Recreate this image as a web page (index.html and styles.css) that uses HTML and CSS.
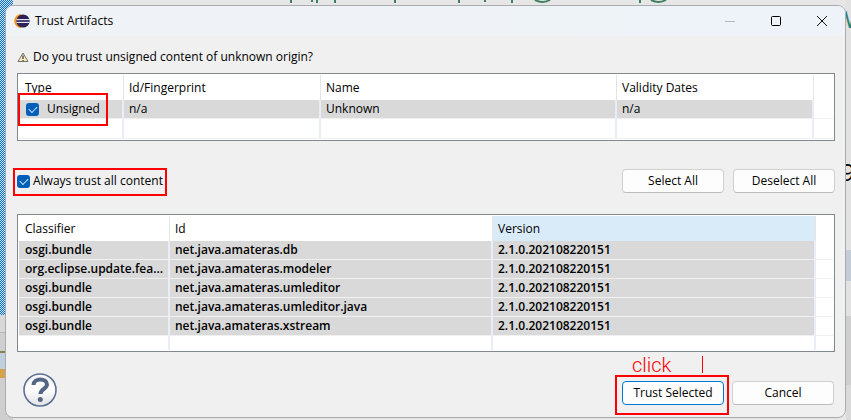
FILE: index.html
```html
<!DOCTYPE html>
<html lang="en">
<head>
<meta charset="utf-8">
<title>Trust Artifacts</title>
<link rel="stylesheet" href="styles.css">
</head>
<body>
<div class="desktop" aria-hidden="true">
  <svg class="checker" width="13" height="315" shape-rendering="crispEdges">
    <defs><pattern id="ck" width="2" height="2" patternUnits="userSpaceOnUse"><rect width="2" height="2" fill="#0070cc"/><rect width="1" height="1" fill="#d0e2f0"/><rect x="1" y="1" width="1" height="1" fill="#d0e2f0"/></pattern></defs>
    <rect width="13" height="315" fill="url(#ck)"/>
  </svg>
  <svg class="fringe" viewBox="0 0 400 5">
    <path fill="#3f7f5f" d="M10 0h2v3h-2zM31 0h2v2h-2zM36 0h2v3h-2zM54 0h2v3h-2zM114 0h2v3h-2zM178 0h2v3h-2zM204 0h2v2h-2zM231 0h2v3h-2zM359 0h2v3h-2z"/>
    <path d="M255 0q8 4 15 0M371 0q8 4 15 0" fill="none" stroke="#3f7f5f" stroke-width="2"/>
  </svg>
  <div class="right-strip"><span class="peek peek-w">W</span><span class="peek peek-9">9</span></div>
  <div class="left-low"></div>
</div>
<main class="dialog">
  <header class="titlebar">
    <svg class="logo" viewBox="0 0 16 16" width="16" height="16">
      <path d="M7 1C-2 2-2 14 7 15z" fill="#f7941e"/>
      <circle cx="9" cy="8" r="6.600" fill="#2c2255"/>
      <path d="M2.500 6.500h13M2.500 9.500h13" stroke="#e6e4f0"/>
      <path d="M2.500 8h13" stroke="#6d6796"/>
    </svg>
    <h1>Trust Artifacts</h1>
    <div class="winbtns">
      <button aria-label="Minimize" disabled><svg viewBox="0 0 12 12" width="12" height="12"><path d="M1 6.500h10" stroke="#b5b9bc"/></svg></button>
      <button aria-label="Maximize"><svg viewBox="0 0 12 12" width="12" height="12"><rect x="1.500" y="1.500" width="9" height="9" rx="1" fill="none" stroke="#000"/></svg></button>
      <button aria-label="Close"><svg viewBox="0 0 12 12" width="12" height="12"><path d="M1 1l10 10M11 1L1 11" stroke="#111"/></svg></button>
    </div>
  </header>
  <div class="content">
    <p class="question">
      <svg viewBox="0 0 12 11" width="12" height="11"><path d="M6 1L11 9.500H1z" fill="#fbe9c4" stroke="#77716a" stroke-linejoin="round"/><path d="M6 3.500v3.500M6 8v1" stroke="#333" stroke-width="1.200"/></svg>
      Do you trust unsigned content of unknown origin?
    </p>
    <div class="grid">
      <table>
        <colgroup><col class="c-type"><col class="c-print"><col class="c-name"><col class="c-print"><col></colgroup>
        <thead><tr><th>Type</th><th>Id/Fingerprint</th><th>Name</th><th>Validity Dates</th><td></td></tr></thead>
        <tbody>
          <tr><td><label class="check marked marked-row"><input type="checkbox" checked>Unsigned</label></td><td>n/a</td><td>Unknown</td><td>n/a</td><td></td></tr>
          <tr class="empty"><td></td><td></td><td></td><td></td><td></td></tr>
        </tbody>
      </table>
    </div>
    <div class="options">
      <label class="check marked marked-all"><input type="checkbox" checked>Always trust all content</label>
      <div class="buttons">
        <button class="btn">Select All</button>
        <button class="btn">Deselect All</button>
      </div>
    </div>
    <div class="grid">
      <table>
        <colgroup><col class="c-class"><col class="c-wide"><col class="c-wide"><col></colgroup>
        <thead><tr><th>Classifier</th><th>Id</th><th class="sorted">Version</th><td></td></tr></thead>
        <tbody class="bold">
          <tr><td>osgi.bundle</td><td>net.java.amateras.db</td><td>2.1.0.202108220151</td><td></td></tr>
          <tr><td>org.eclipse.update.fea...</td><td>net.java.amateras.modeler</td><td>2.1.0.202108220151</td><td></td></tr>
          <tr><td>osgi.bundle</td><td>net.java.amateras.umleditor</td><td>2.1.0.202108220151</td><td></td></tr>
          <tr><td>osgi.bundle</td><td>net.java.amateras.umleditor.java</td><td>2.1.0.202108220151</td><td></td></tr>
          <tr><td>osgi.bundle</td><td>net.java.amateras.xstream</td><td>2.1.0.202108220151</td><td></td></tr>
          <tr class="empty last"><td></td><td></td><td></td><td></td></tr>
        </tbody>
      </table>
    </div>
    <footer class="footer">
      <button class="help" aria-label="Help">
        <svg viewBox="0 0 36 36" width="36" height="36">
          <defs><linearGradient id="hg" x1="0" y1="0" x2="0" y2="1"><stop offset="0" stop-color="#f5f5f5"/><stop offset=".5" stop-color="#fcfcfc"/><stop offset="1" stop-color="#e2e2e4"/></linearGradient></defs>
          <circle cx="18" cy="18" r="16" fill="url(#hg)" stroke="#5c6f91" stroke-width="1.600"/>
          <path d="M11.500 13c0-7.500 13.500-7 13.500-.5 0 4.500-6.500 4.500-6.500 9.500" fill="none" stroke="#526583" stroke-width="4"/>
          <circle cx="18.300" cy="27.500" r="2.500" fill="#526583"/>
        </svg>
      </button>
      <div class="buttons">
        <div class="marked marked-trust">
          <span class="note">click</span><span class="caret"></span>
          <button class="btn primary">Trust Selected</button>
        </div>
        <button class="btn">Cancel</button>
      </div>
    </footer>
  </div>
</main>
</body>
</html>
```
FILE: styles.css
```css
* { box-sizing: border-box; }
body {
  margin: 0;
  padding: 5px 5px 2px;
  min-height: 100vh;
  display: flex;
  overflow: hidden;
  position: relative;
  background: #e6e6e6;
  color: #000;
  font: 12px/18px "Open Sans", "Noto Sans", sans-serif;
}
button, input { font: inherit; color: inherit; }

.desktop { position: absolute; inset: 0; }
.checker { position: absolute; top: 0; left: 0; }
.fringe { position: absolute; left: 280px; top: 0; width: 400px; height: 5px; }
.right-strip { position: absolute; right: 0; top: 0; bottom: 0; width: 5px; overflow: hidden; background: linear-gradient(#e2e2e2 250px, #c4ccd8 250px, #c4ccd8 281px, #e2e2e2 281px, #e2e2e2 316px, #cfcfcf 316px, #cfcfcf 385px, #dadada 385px); }
.peek { position: absolute; font-size: 24px; line-height: 24px; }
.peek-w { left: -2px; top: 7px; color: #2f7f75; }
.peek-9 { left: -5px; top: 160px; }
.left-low { position: absolute; left: 0; top: 315px; bottom: 0; width: 13px; background: linear-gradient(#d8d8d8 17px, #b9b9b9 17px, #b9b9b9 18px, #cfcfcf 18px, #cfcfcf 36px, #8a8150 36px, #8a8150 38px, #bfd0dc 38px, #bfd0dc 54px, #d5a24a 54px, #d5a24a 63px, #cfcfcf 63px); }

.dialog {
  position: relative;
  flex: 1;
  display: flex;
  flex-direction: column;
  background: #f0f0f0;
  border: 1px solid #a9abae;
  border-radius: 8px;
  overflow: hidden;
}
.titlebar {
  display: flex;
  align-items: center;
  height: 30px;
  padding-left: 8px;
  background: linear-gradient(90deg, #f0f3f6, #edf3f9);
}
.titlebar h1 { margin: 0 0 0 5px; font-size: 12px; font-weight: 400; }
.winbtns { display: flex; margin-left: auto; }
.winbtns button { width: 46px; height: 30px; padding: 0; border: 0; background: none; display: grid; place-items: center; }

.content { display: flex; flex-direction: column; padding: 12px 10px 0 11px; }
.question { margin: 0 0 7px; display: flex; align-items: center; gap: 4px; }
.grid { border: 1px solid #828790; background: #fff; padding: 1px; }
table { width: 100%; table-layout: fixed; border-collapse: separate; border-spacing: 0; }
th, td { padding: 0 0 0 5px; text-align: left; font-weight: 400; white-space: nowrap; border-right: 1px solid #e5e5e5; }
tr > :first-child { padding-left: 6px; }
tr > :last-child { border-right: 0; }
th { height: 25px; }
tbody td { height: 19px; line-height: 18px; border-right: 2px solid #e9edf5; border-bottom: 1px solid #f0f0f0; }
tbody td:not(:last-child) { background: #d9d9d9; }
tbody .empty td { height: 20px; background: #fff; }
tbody .empty.last td { height: 14px; border-bottom: 0; }
.bold td { font-weight: 600; }
.sorted { background: #d9ebf9; }
.c-type { width: 105px; }
.c-print { width: 197px; }
.c-name { width: 296px; }
.c-class { width: 151px; }
.c-wide { width: 323px; }

.check { position: relative; display: inline-flex; align-items: center; gap: 3px; }
td .check { display: flex; width: max-content; gap: 8px; padding-left: 1px; }
.check input {
  appearance: none;
  margin: 0;
  width: 13px;
  height: 13px;
  border-radius: 3px;
  background: #005fb8;
  display: grid;
  place-items: center;
}
.check input:checked::before {
  content: "";
  width: 7px;
  height: 4px;
  border: solid #cfe3f5;
  border-width: 0 0 1px 1px;
  transform: translateY(-1px) rotate(-45deg);
}
.marked { position: relative; }
.marked::after { content: ""; position: absolute; border: 2px solid #f00; pointer-events: none; }
.marked-row::after { inset: -7px -8px -8px -7px; }
.marked-all::after { inset: -4px -4px -6px -4px; }
.marked-trust::after { inset: -6px -5px -7px -7px; }

.options { display: flex; align-items: center; justify-content: space-between; padding: 28px 0 21px; }
.buttons { display: flex; gap: 9px; }
.btn {
  display: block;
  width: 102px;
  height: 24px;
  padding: 0;
  border: 1px solid #d0d0d0;
  border-bottom-color: #bcbcbc;
  border-radius: 4px;
  background: #fdfdfd;
}
.primary { border-color: #0078d4; }
.footer { display: flex; justify-content: space-between; padding: 20px 1px 0 5px; }
.footer .buttons { padding-top: 9px; gap: 8px; }
.help { padding: 0; border: 0; background: none; height: 36px; }
.help svg { display: block; }
.note { position: absolute; left: 10px; top: -28px; color: #f00; font: 300 20px/24px Roboto, sans-serif; }
.caret { position: absolute; left: 80px; top: -25px; width: 1px; height: 17px; background: #f00; }
```
